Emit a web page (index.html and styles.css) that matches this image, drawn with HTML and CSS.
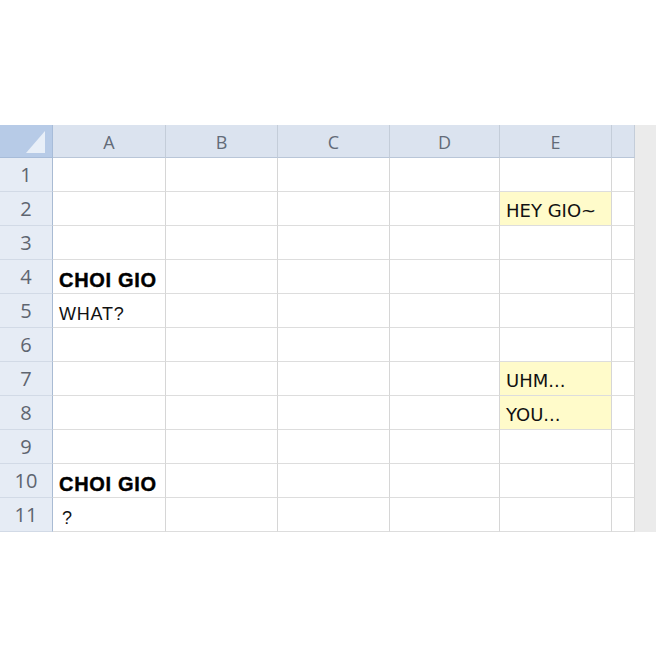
FILE: index.html
```html
<!DOCTYPE html>
<html>
<head>
<meta charset="utf-8">
<link rel="stylesheet" href="styles.css">
</head>
<body>
<div class="page">
  <div class="sheet">
    <div class="corner"><span class="tri"></span></div>
    <div class="colh">A</div>
    <div class="colh">B</div>
    <div class="colh">C</div>
    <div class="colh">D</div>
    <div class="colh">E</div>
    <div class="colh"></div>
    <div class="scroll"></div>

    <div class="rowh">1</div><div class="cell"></div><div class="cell"></div><div class="cell"></div><div class="cell"></div><div class="cell"></div><div class="cell"></div>
    <div class="rowh">2</div><div class="cell"></div><div class="cell"></div><div class="cell"></div><div class="cell"></div><div class="cell hl">HEY GIO~</div><div class="cell"></div>
    <div class="rowh">3</div><div class="cell"></div><div class="cell"></div><div class="cell"></div><div class="cell"></div><div class="cell"></div><div class="cell"></div>
    <div class="rowh">4</div><div class="cell bold">CHOI GIO</div><div class="cell"></div><div class="cell"></div><div class="cell"></div><div class="cell"></div><div class="cell"></div>
    <div class="rowh">5</div><div class="cell arial">WHAT?</div><div class="cell"></div><div class="cell"></div><div class="cell"></div><div class="cell"></div><div class="cell"></div>
    <div class="rowh">6</div><div class="cell"></div><div class="cell"></div><div class="cell"></div><div class="cell"></div><div class="cell"></div><div class="cell"></div>
    <div class="rowh">7</div><div class="cell"></div><div class="cell"></div><div class="cell"></div><div class="cell"></div><div class="cell hl">UHM...</div><div class="cell"></div>
    <div class="rowh">8</div><div class="cell"></div><div class="cell"></div><div class="cell"></div><div class="cell"></div><div class="cell hl">YOU...</div><div class="cell"></div>
    <div class="rowh">9</div><div class="cell"></div><div class="cell"></div><div class="cell"></div><div class="cell"></div><div class="cell"></div><div class="cell"></div>
    <div class="rowh">10</div><div class="cell bold">CHOI GIO</div><div class="cell"></div><div class="cell"></div><div class="cell"></div><div class="cell"></div><div class="cell"></div>
    <div class="rowh">11</div><div class="cell arial q">?</div><div class="cell"></div><div class="cell"></div><div class="cell"></div><div class="cell"></div><div class="cell"></div>
  </div>
</div>
</body>
</html>
```

FILE: styles.css
```css
html, body {
  margin: 0;
  padding: 0;
  background: #ffffff;
}
.page {
  width: 656px;
  height: 656px;
  padding-top: 125px;
  box-sizing: border-box;
}
.sheet {
  display: grid;
  grid-template-columns: 53px 113px 112px 112px 110px 112px 23px 21px;
  grid-template-rows: 33px repeat(11, 34px);
}
.sheet > div {
  box-sizing: border-box;
}
.corner {
  background: #b7cbe7;
  border-right: 1px solid #a7bcd9;
  border-bottom: 1px solid #a7bcd9;
  position: relative;
}
.tri {
  position: absolute;
  left: 26px;
  top: 6px;
  width: 0;
  height: 0;
  border-left: 19px solid transparent;
  border-bottom: 22px solid #e8eff8;
}
.colh {
  background: #dbe3ef;
  border-right: 1px solid #c4cdd9;
  border-bottom: 1px solid #b9c6d8;
  display: flex;
  align-items: center;
  justify-content: center;
  font-family: "Open Sans", "DejaVu Sans", sans-serif;
  font-size: 18px;
  color: #636b78;
  padding-top: 1px;
}
.scroll {
  grid-column: 8;
  grid-row: 1 / span 12;
  background: #ebebeb;
}
.rowh {
  background: #e6ecf5;
  border-right: 1px solid #a9bbd3;
  border-bottom: 1px solid #d2dae6;
  display: flex;
  align-items: center;
  justify-content: center;
  font-family: "Open Sans", "DejaVu Sans", sans-serif;
  font-size: 20px;
  color: #5e6570;
}
.cell {
  border-right: 1px solid #d6d6d6;
  border-bottom: 1px solid #dddddd;
  display: flex;
  align-items: center;
  padding-left: 6px;
  padding-top: 4px;
  font-family: "DejaVu Sans", sans-serif;
  font-size: 18px;
  color: #111111;
  white-space: nowrap;
}
.hl {
  background: #fffbca;
}
.bold {
  font-family: "Liberation Sans", Arial, sans-serif;
  font-weight: bold;
  font-size: 20px;
  letter-spacing: 0.7px;
  color: #000000;
  -webkit-text-stroke: 0.4px #000000;
  padding-top: 7px;
}
.arial {
  font-family: "Liberation Sans", Arial, sans-serif;
  font-size: 18px;
  letter-spacing: 0.8px;
  padding-top: 8px;
}
.q {
  padding-left: 9px;
}
```
